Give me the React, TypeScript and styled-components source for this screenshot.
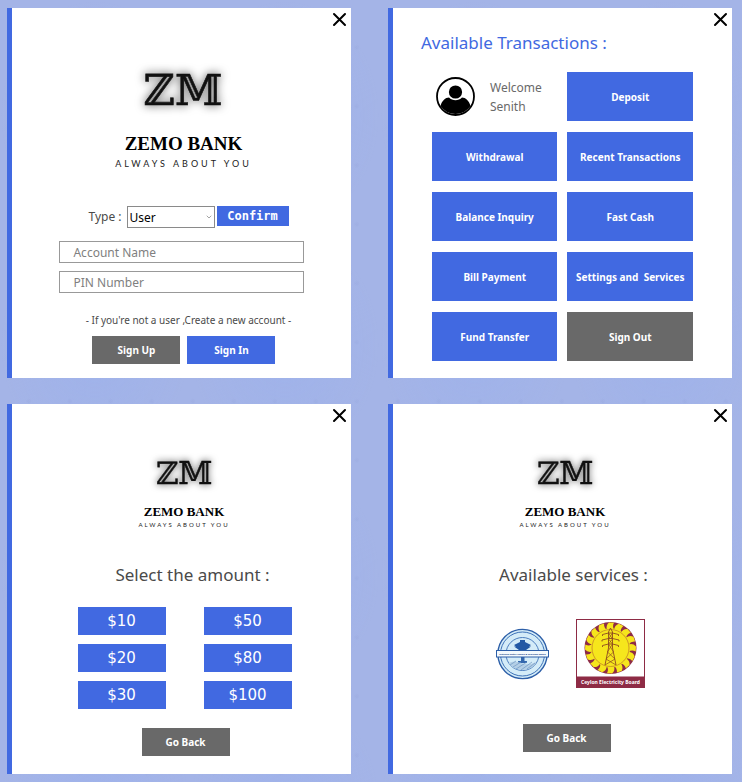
import React from "react";
import styled, { createGlobalStyle, css } from "styled-components";
import { ChevronDown } from "lucide-react";

const BLUE = "#4169e1";
const GREY = "#696969";

const GlobalStyle = createGlobalStyle`
  *, *::before, *::after { box-sizing: border-box; }
  body {
    margin: 0;
    background-color: #a4b4e7;
    background-image:
      radial-gradient(circle at 20% 30%, rgba(120, 130, 190, 0.1) 0 1px, transparent 4px),
      radial-gradient(circle at 70% 80%, rgba(120, 130, 190, 0.08) 0 1px, transparent 3px),
      radial-gradient(ellipse at 50% 50%, rgba(150, 175, 240, 0.35), transparent 70%);
    background-size: 67px 83px, 41px 59px, 190px 230px;
    font-family: "Noto Sans", "Open Sans", sans-serif;
    color: #4a4a4a;
  }
  button, input, select { font: inherit; margin: 0; border-radius: 0; }
`;

const Page = styled.main`
  display: grid;
  grid-template-columns: repeat(2, minmax(0, 1fr));
  gap: 26px 37px;
  padding: 8px 10px 8px 7px;
`;

const Card = styled.section`
  display: flex;
  flex-direction: column;
  align-items: center;
  min-height: 370px;
  padding-bottom: 14px;
  background: #fff;
  border-left: 5px solid ${BLUE};
`;

const TopBar = styled.header`
  display: flex;
  justify-content: flex-end;
  align-self: stretch;
  padding: 4px 4px 0 0;
`;

const CloseButton = styled.button`
  display: flex;
  padding: 0;
  border: 0;
  background: none;
  cursor: pointer;
`;

const Brand = styled.div<{ $large?: boolean }>`
  display: flex;
  flex-direction: column;
  align-items: center;
  padding: ${(p) => (p.$large ? "22px 0 33px 4px" : "21px 0 33px 5px")};
`;

const Mark = styled.svg<{ $large?: boolean }>`
  display: block;
  width: ${(p) => (p.$large ? 128 : 92)}px;
  height: auto;
  overflow: visible;
`;

const MarkText = styled.text`
  font-family: "DejaVu Serif", serif;
  font-size: 43px;
  fill: #111;
  stroke: #111;
  stroke-width: 0.6px;
  filter: drop-shadow(0 0 5px rgba(0, 0, 0, 0.7));
`;

const BankName = styled.div<{ $large?: boolean }>`
  font-family: "Liberation Serif", serif;
  font-weight: 700;
  font-size: ${(p) => (p.$large ? 19 : 13)}px;
  line-height: ${(p) => (p.$large ? 22 : 16)}px;
  color: #000;
`;

const Tagline = styled.div<{ $large?: boolean }>`
  font-family: Lato, sans-serif;
  font-size: ${(p) => (p.$large ? 9 : 6)}px;
  line-height: ${(p) => (p.$large ? 18 : 10)}px;
  letter-spacing: ${(p) => (p.$large ? 3 : 2)}px;
  color: #222;
`;

const PageTitle = styled.h1`
  align-self: stretch;
  margin: 0;
  padding: 4px 28px 0;
  font-size: 17px;
  font-weight: 400;
  line-height: 24px;
  color: ${BLUE};
`;

const StepTitle = styled.h2`
  margin: 0;
  padding-left: 22px;
  font-size: 17px;
  font-weight: 400;
  line-height: 24px;
`;

const ActionButton = styled.button<{ $tone?: "blue" | "grey"; $size?: "small" | "tile" }>`
  border: 0;
  padding: 0;
  color: #fff;
  background: ${(p) => (p.$tone === "grey" ? GREY : BLUE)};
  font-size: 10px;
  font-weight: 700;
  white-space: pre;
  cursor: pointer;
  ${(p) =>
    p.$size === "tile"
      ? css`
          height: 49px;
        `
      : css`
          width: 88px;
          height: 28px;
        `}
`;

const AmountButton = styled(ActionButton)`
  font-family: "DejaVu Sans", sans-serif;
  font-size: 15px;
  font-weight: 400;
`;

const LoginForm = styled.form`
  display: flex;
  flex-direction: column;
  align-items: center;
  width: 72%;
`;

const TypeRow = styled.div`
  display: flex;
  align-items: flex-start;
  padding-left: 14px;
  margin-bottom: 13px;
`;

const TypeLabel = styled.label`
  margin-right: 5px;
  font-size: 12px;
  line-height: 22px;
`;

const SelectBox = styled.div`
  display: grid;
  align-items: center;
  width: 88px;
  margin-right: 2px;

  > * { grid-area: 1 / 1; }
  > svg { justify-self: end; margin-right: 2px; pointer-events: none; }
`;

const Select = styled.select`
  appearance: none;
  width: 100%;
  height: 22px;
  padding: 0 2px;
  border: 1px solid #8a8a8a;
  background: #fff;
  color: #000;
  font-size: 12px;
`;

const ConfirmButton = styled.button`
  width: 72px;
  height: 20px;
  padding: 0;
  border: 0;
  background: ${BLUE};
  color: #fff;
  font-family: "DejaVu Sans Mono", monospace;
  font-size: 12px;
  font-weight: 700;
  cursor: pointer;
`;

const Field = styled.input`
  width: 100%;
  height: 22px;
  margin-bottom: 8px;
  padding: 0 13px;
  border: 1px solid #999;
  background: #fff;
  font-size: 12px;

  &::placeholder { color: #808080; opacity: 1; }
`;

const Note = styled.p`
  margin: 11px 0 8px;
  padding-left: 14px;
  font-size: 10px;
  line-height: 16px;
  white-space: nowrap;
`;

const ButtonRow = styled.div`
  display: flex;
  gap: 7px;
  padding-left: 5px;
`;

const TileGrid = styled.div`
  display: grid;
  grid-template-columns: repeat(2, minmax(0, 1fr));
  gap: 11px 10px;
  width: 77%;
  margin-top: 17px;
`;

const Profile = styled.div`
  display: flex;
  align-items: center;
  gap: 15px;
  padding-left: 4px;
`;

const Greeting = styled.p`
  margin: 0;
  font-size: 12px;
  line-height: 19px;
  color: #696969;
`;

const AmountGrid = styled.div`
  display: grid;
  grid-template-columns: auto auto;
  gap: 9px 38px;
  padding-left: 6px;
  margin: 20px 0 19px;
`;

const CentredAction = styled.div`
  padding-left: 8px;
`;

const Services = styled.div`
  display: flex;
  align-items: center;
  gap: 27px;
  padding-left: 16px;
  margin: 32px 0 36px;
`;

const ServiceLink = styled.a`
  display: block;
  svg { display: block; }
`;

const BoardText = styled.text`
  font-family: "Noto Sans", sans-serif;
  font-weight: 700;
  text-anchor: middle;
`;

function Close() {
  return (
    <TopBar>
      <CloseButton type="button" aria-label="Close">
        <svg width="15" height="15" viewBox="0 0 15 15" stroke="#000" strokeWidth="2" strokeLinecap="round" aria-hidden="true">
          <path d="M2 2 L13 13 M13 2 L2 13" />
        </svg>
      </CloseButton>
    </TopBar>
  );
}

function Logo({ large }: { large?: boolean }) {
  return (
    <Brand $large={large}>
      <Mark $large={large} viewBox="0 0 128 84" role="img" aria-label="ZM">
        <MarkText x="64" y="56" textAnchor="middle">ℤ𝕄</MarkText>
      </Mark>
      <BankName $large={large}>ZEMO BANK</BankName>
      <Tagline $large={large}>ALWAYS ABOUT YOU</Tagline>
    </Brand>
  );
}

function Avatar() {
  return (
    <svg width="39" height="39" viewBox="0 0 39 39" aria-hidden="true">
      <circle cx="19.5" cy="19.5" r="18.5" fill="#fff" stroke="#000" strokeWidth="1.8" />
      <circle cx="19.5" cy="15" r="6.6" />
      <path d="M4.5 29 C6 23.500 9.500 20.500 13 20.500 C16.500 24 22.500 24 26 20.500 C29.500 20.500 33 23.500 34.500 29 A18 18 0 0 1 4.500 29 Z" />
    </svg>
  );
}

function WaterBoard() {
  return (
    <svg width="53" height="52" viewBox="0 0 53 52" role="img" aria-label="National Water Supply and Drainage Board">
      <circle cx="26.500" cy="26" r="24.600" fill="#d4ecf8" stroke="#2d5fa8" strokeWidth="1.400" />
      <circle cx="26.500" cy="26" r="22" fill="none" stroke="#3d72b8" strokeWidth="1" />
      <circle cx="26.500" cy="26" r="16.500" fill="#d4ecf8" stroke="#3d72b8" strokeWidth="0.900" />
      <path d="M24 12 h5 v2 h-5z M18 17 L24 14 H29 L35 17 L33 18.500 H35 L30 22 H23 L18 18.500 H20z" fill="#2359a4" />
      <path d="M25 28 h3.500 v5 h2.500 v2 h-9 v-2 h3z" fill="#3467ad" />
      <path d="M12.500 35 Q18 32 25 35 T40.500 34 Q36 42 26.500 42 Q17 42 12.500 35z" fill="#b4cfe6" />
      <path d="M14 37 L20 33 M17 39 L25 34 M20 41 L31 34 M25 42 L36 34 M31 41 L39 35" fill="none" stroke="#6f96c2" strokeWidth="0.700" />
      <rect x="0.500" y="22.500" width="52" height="6.500" fill="#f4fafd" stroke="#2d5fa8" strokeWidth="1" />
      <BoardText x="26.500" y="26.600" fontSize="2.300" fill="#1d468c">National Water Supply &amp; Drainage Board</BoardText>
    </svg>
  );
}

const BLADES = Array.from({ length: 16 }, (_, i) => i * 22.5);

function ElectricityBoard() {
  return (
    <svg width="69" height="69" viewBox="0 0 69 69" role="img" aria-label="Ceylon Electricity Board">
      <rect x="0.500" y="0.500" width="68" height="68" fill="#fff" stroke="#8e2b45" />
      <rect y="57.500" width="69" height="11.500" fill="#8e2b45" />
      <circle cx="34.500" cy="29" r="26" fill="#8e2b45" />
      {BLADES.map((angle) => (
        <path
          key={angle}
          d="M31 11 Q29.500 6.500 33 3.500 L38 3.800 Q36 7.500 38.200 11z"
          fill="#f6e61c"
          transform={`rotate(${angle} 34.500 29)`}
        />
      ))}
      <circle cx="34.500" cy="29" r="19.500" fill="#f6e61c" />
      <circle cx="34.500" cy="29" r="18.500" fill="none" stroke="#b5652a" strokeWidth="0.600" />
      <g fill="none" stroke="#8e4a20" strokeWidth="0.900">
        <path d="M34.500 9 L32.500 13 V29 L29 46 M34.500 9 L36.500 13 V29 L40 46" />
        <path d="M26.500 17 V15.500 L32.500 14 H36.500 L42.500 15.500 V17 M26 22.500 V21 L32.500 19.500 H36.500 L43 21 V22.500 M26.500 28 V26.500 L32.500 25 H36.500 L42.500 26.500 V28" />
        <path d="M32.500 14 L36.500 20 L32.500 25 L37.500 33 L30 40 L40 46 M36.500 14 L32.500 20 L36.500 25 L31.500 33 L39 40 L29 46" strokeWidth="0.700" />
      </g>
      <BoardText x="34.500" y="65" fontSize="5" fill="#fff">Ceylon Electricity Board</BoardText>
    </svg>
  );
}

const TILES = [
  "Deposit",
  "Withdrawal",
  "Recent Transactions",
  "Balance Inquiry",
  "Fast Cash",
  "Bill Payment",
  "Settings and  Services",
  "Fund Transfer",
];

const AMOUNTS = ["$10", "$50", "$20", "$80", "$30", "$100"];

function SignInCard() {
  return (
    <Card>
      <Close />
      <Logo large />
      <LoginForm onSubmit={(e) => e.preventDefault()}>
        <TypeRow>
          <TypeLabel htmlFor="type">Type :</TypeLabel>
          <SelectBox>
            <Select id="type" defaultValue="User">
              <option>User</option>
              <option>Admin</option>
            </Select>
            <ChevronDown size={8} color="#777" aria-hidden="true" />
          </SelectBox>
          <ConfirmButton type="button">Confirm</ConfirmButton>
        </TypeRow>
        <Field type="text" placeholder="Account Name" aria-label="Account Name" />
        <Field type="password" placeholder="PIN Number" aria-label="PIN Number" />
        <Note>- If you're not a user ,Create a new account -</Note>
        <ButtonRow>
          <ActionButton type="button" $tone="grey">Sign Up</ActionButton>
          <ActionButton type="submit">Sign In</ActionButton>
        </ButtonRow>
      </LoginForm>
    </Card>
  );
}

function TransactionsCard() {
  return (
    <Card>
      <Close />
      <PageTitle>Available Transactions :</PageTitle>
      <TileGrid>
        <Profile>
          <Avatar />
          <Greeting>
            Welcome
            <br />
            Senith
          </Greeting>
        </Profile>
        {TILES.map((tile) => (
          <ActionButton key={tile} type="button" $size="tile">{tile}</ActionButton>
        ))}
        <ActionButton type="button" $size="tile" $tone="grey">Sign Out</ActionButton>
      </TileGrid>
    </Card>
  );
}

function AmountCard() {
  return (
    <Card>
      <Close />
      <Logo />
      <StepTitle>Select the amount :</StepTitle>
      <AmountGrid>
        {AMOUNTS.map((amount) => (
          <AmountButton key={amount} type="button">{amount}</AmountButton>
        ))}
      </AmountGrid>
      <CentredAction>
        <ActionButton type="button" $tone="grey">Go Back</ActionButton>
      </CentredAction>
    </Card>
  );
}

function ServicesCard() {
  return (
    <Card>
      <Close />
      <Logo />
      <StepTitle>Available services :</StepTitle>
      <Services>
        <ServiceLink href="#water"><WaterBoard /></ServiceLink>
        <ServiceLink href="#electricity"><ElectricityBoard /></ServiceLink>
      </Services>
      <CentredAction>
        <ActionButton type="button" $tone="grey">Go Back</ActionButton>
      </CentredAction>
    </Card>
  );
}

export default function App() {
  return (
    <>
      <GlobalStyle />
      <Page>
        <SignInCard />
        <TransactionsCard />
        <AmountCard />
        <ServicesCard />
      </Page>
    </>
  );
}
